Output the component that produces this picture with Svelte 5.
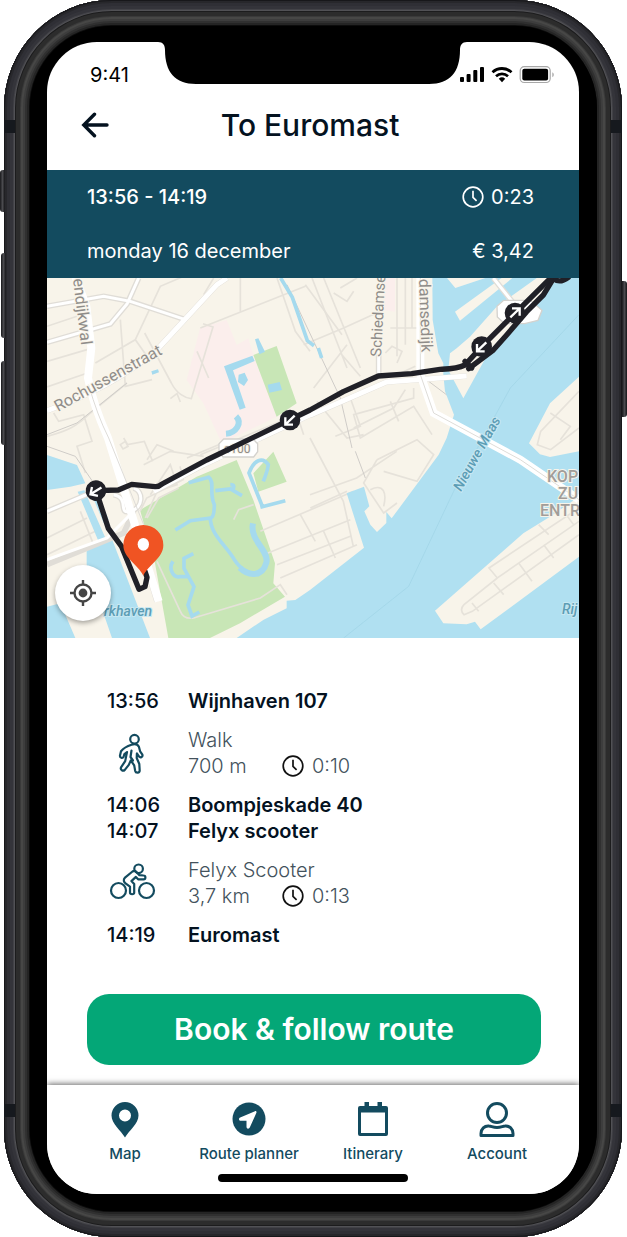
<script>
  const tabs = ['Map', 'Route planner', 'Itinerary', 'Account'];
  const stops = [
    { kind: 'stop', rows: [['13:56', 'Wijnhaven 107']] },
    { kind: 'leg', icon: 'walk', name: 'Walk', distance: '700 m', duration: '0:10' },
    { kind: 'stop', rows: [['14:06', 'Boompjeskade 40'], ['14:07', 'Felyx scooter']] },
    { kind: 'leg', icon: 'bike', name: 'Felyx Scooter', distance: '3,7 km', duration: '0:13' },
    { kind: 'stop', rows: [['14:19', 'Euromast']] }
  ];
  // Direction markers along the route: centre and heading in degrees.
  const markers = [
    [729, 426, 0],
    [147, 638, 12],
    [1304, 206, 0],
    [1404, 105, 180]
  ];
</script>

{#snippet clock()}
  <svg class="clock" viewBox="0 0 22 22" aria-hidden="true">
    <circle cx="11" cy="11" r="9.8" /><path d="M11 4.8v6.6l3.6 3.4" />
  </svg>
{/snippet}

<div class="phone">
  <i class="key mute"></i><i class="key up"></i><i class="key down"></i><i class="key power"></i>
  <i class="band tl"></i><i class="band tr"></i><i class="band bl"></i><i class="band br"></i>
  <div class="bezel">
    <main class="screen">
      <svg class="notch" viewBox="0 0 309 42" aria-hidden="true">
        <path d="M0 0c5 0 7 3 7 8C7 30 17 42 38 42H271C292 42 302 30 302 8c0-5 2-8 7-8z" />
      </svg>

      <div class="status">
        <span>9:41</span>
        <svg viewBox="0 0 95 18" aria-hidden="true">
          <rect x="0" y="11" width="4" height="5" rx="1" /><rect x="6.6" y="8" width="4" height="8" rx="1" />
          <rect x="13.3" y="4" width="4" height="12" rx="1" /><rect x="20" y="1" width="4" height="15" rx="1" />
          <g fill="none" stroke="#000" stroke-width="2.8">
            <path d="M32.5 6.2a14 14 0 0 1 19 0" /><path d="M36 10.2a9 9 0 0 1 12 0" />
          </g>
          <path d="M38.8 12.7a5 5 0 0 1 6.4 0L42 16.2z" />
          <rect x="60.2" y=".7" width="30" height="15.8" rx="4" fill="none" stroke="#a8a8a8" stroke-width="1.2" />
          <rect x="62.3" y="2.8" width="25.8" height="11.6" rx="2" />
          <path d="M92.3 6.2c2 1 2 4 0 5z" fill="#a8a8a8" />
        </svg>
      </div>

      <header>
        <button class="back" aria-label="Back">
          <svg viewBox="0 0 28 26"><path d="M26 13H3M13.5 2.2 2.8 13l10.7 10.8" /></svg>
        </button>
        <h1>To Euromast</h1>
      </header>

      <section class="trip">
        <div><strong>13:56 - 14:19</strong><span class="time">{@render clock()}0:23</span></div>
        <div><span>monday 16 december</span><span>€ 3,42</span></div>
      </section>

      <section class="map" aria-label="Route map">
        <svg viewBox="0 0 532 360">
          <rect width="532" height="360" fill="#f8f4ea" />
          <g transform="scale(.33333)">
            <path class="pink" d="M459 151 539 126l30 75 35-20 15 50 70 185-165 80-55-120-50-70zM1014 0h30v101l-35-5z" />
            <path class="green" d="M279 696 449 596 569 546l50 120 65 190-5 60 35 40-135 80-90 44H364L324 856zM619 586l60-65 40 90-85 30zM619 231l70-27 60 172-60 40z" />

            <g class="minor">
              <path d="M0 145l90-30M0 250l120-35M0 327l115-40M0 475c60-15 90-30 130-70l110-90M145 255l120-70 35 50M220 125l15 200 80-20M265 185l75-160 70-30M293 165l80 150c15 30 40 45 60 47l65-215-30-10M370 362l20-15 10 25M450 220l35 80M470 50l30-50M460 150l315-125M580 100V0M690 0l55 160 44 60M775 20l110 150M800 330l100-130M460 530l290-120 20 60M20 405l15 25 75-20 25 80-45 15 25 80M230 480l12 20 50-10 25 60M220 500l15-10 8 15-15 8zM290 560l80-40 100 15M420 540l120-50" />
              <path d="M795 0l105 270M830 0l110 270M880 30l50-30M860 45l40 25 20-30M770 200l120-50 110-50M1050 0v235M1075 0v200M1095 0v150M1030 150h110M880 225l60 70M1015 225l20-20 30 15-15 35M1040 295l65-30M910 360l30 85-75 30M920 450l120-60 35-55M1100 330v30l-180 50 20 70 160-95 55 85M810 370l90 110 50-10M1030 370l25 60M990 545l120-60 50 45-50 80-100-30" />
              <path d="M300 545l30-45 50 20M310 650l60-90 20 60-60 20-35 80M789 480l100 190 30 135M789 650l140-50 120-80M790 690l110-50M640 760l280-120M650 830l260-105M690 860l220-85M700 900l230-100M760 710l45 80M830 760l35 80M990 545l-40 70 60 90 40-30M970 635c40-20 50 10 40 50M560 725l15-30 45-15M300 720l35-60 60-30M0 830l145-70M100 700l60 150M0 780l120-60" />
              <path d="M279 700l20-40 110-55-10-40M330 850l70 150q10 25 40 20l200-60 60-40 20 30" />
            </g>
            <path class="rail" d="M0 470l90-35 150-120M720 20l80 170 80 170 35 150M0 505l85 30 55 80M1145 310l120 90 230 140M925 520l30 80" />

            <path class="water" d="M1156 0 1157 126 1174 226 1189 256 1189 290 1194 340 1221 410 1199 480 1175 530 1034 721 1018 702V735L990 762 970 740 952 700 967 685 951 626 899 646 951 809 789 936 745 966 719 968V991L650 1025 569 1080H1596V0z" />
            <path class="water" d="M0 531l90 30 25 55-45 10L0 636zM92 641l20-4 65 147-20 12zM130 640l15-10 40 95-15 10zM119 816l75-35 115 299H195L119 860zM0 986l40-10 45 104H0z" />
            <path class="pond" d="M701 0l35 58 45 130 20 15M814 210l10 30" />
            <path class="pond fill" d="M531 265l85-32 7 16-65 28 38 112-18 6zM575 290l18-6 10 22-12 18-18-12zM624 184l10-3 20 40-17 8zM662 320l36-8 7 24-38 8zM313 280l20-6 3 9-20 7z" />
            <path class="pond thick" d="M567 415c20 20 0 50-30 52" />
            <path class="pond" d="M425 614l60-16c20 15 0 45 17 82 0 30-5 40-12 40l-60 8-45 28M505 638l45-5 35 20M550 620q18 0 5 18M439 827l-28 14v30l30 55-18 55 12 33 22-12M378 850c-15 20 0 50 20 46h30M490 720c0 50 50 85 72 125 20 30 40 40 75 45M648 690l-42-105c15-40 40-50 58-25-2 20-8 30-15 50M640 688l75-20" />
            <path class="pond thick" d="M618 736c-12 50 50 83 40 118-12 45-55 40-80 15" />

            <path class="land" d="M1200 0h115l-90 30zM1224 101 1364 0h32L1239 128zM1229 211 1269 176 1349 86 1419 36 1489-14 1539-4 1429 106 1329 216 1249 361 1204 276 1209 226zM1446 496 1509 376 1596 296V520L1509 537l-30-8zM1164 998 1429 766 1509 716 1596 656V836L1301 1054l-17-23-25 8-70-3z" />
            <g class="minor">
              <path d="M1596 340l-115 120-10 40 40 15 85-65M1510 405l60 40-30 40" />
              <path d="M1596 690l-270 180 25 30 245-170M1351 900l-100 80q-15 15 0 30l25-10 320-230M1340 915l30 35M1275 975l20 25M1415 855l40 55M1490 800l30 40M1475 740l30 30M1550 700l30 40" />
            </g>
            <path class="ferry" d="M1596 110 1390 330 1220 640 1085 925 890 1080" />

            <g class="casing">
              <path d="M0 85l170-30 80 15 165 55M0 193l190-55 50-60 35-78M0 398C110 360 230 300 330 215L510 20l30-20M83-10l35 95 15 125-10 90q15 80 60 180L330 970M789 412l230-100 240-18M1120 0v290l40 115 260 140 176 120M320 640l150-80 320-150M995 294v-80M1339 0l60 75M0 700l130-55M0 860l230-95 30-65M200 650c50 10 10 60 50 50s40-60 10-70" />
            </g>
            <g class="road">
              <path class="slim" d="M0 85l170-30 80 15 165 55M0 193l190-55 50-60 35-78M995 294v-80M1339 0l60 75M0 700l130-55M0 845l180-65 80-80M200 650c50 10 10 60 50 50s40-60 10-70" />
              <path d="M0 398C110 360 230 300 330 215L510 20l30-20M789 412l230-100 240-18M320 640l150-80 320-150" />
              <path class="wide" d="M83-10l35 95 15 125-10 90q15 80 60 180L335 970M1120 0v290l40 115 260 140 176 120" />
            </g>
            <path class="lane" d="M1120 0v290l40 115 260 140 176 120M125 320q25 90 60 160L290 740" />
            <path class="shield" d="M530 483h88l14 14v24l-12 16h-92l-12-16v-24zM1350 85l20-18h80l35 30-12 30-40 10h-60l-22-20z" />
          </g>
          <g class="label">
            <text font-size="16" transform="translate(26 1) rotate(83)">endijkwal</text>
            <text font-size="16" transform="translate(11 134) rotate(-29)">Rochussenstraat</text>
            <text font-size="15" transform="translate(334 79) rotate(-87)">Schiedamse</text>
            <text font-size="16" transform="translate(372 1) rotate(88)">damsedijk</text>
            <text font-size="12" x="177" y="175">s100</text>
            <text class="blue" font-size="14" transform="translate(414 214) rotate(-61)">Nieuwe Maas</text>
            <text class="blue" font-size="14" x="57" y="338">rkhaven</text>
            <text class="blue" font-size="14" x="515" y="336">Rij</text>
            <text class="place" font-size="16" x="500" y="204">KOP</text>
            <text class="place" font-size="16" x="511" y="221">ZU</text>
            <text class="place" font-size="16" x="493" y="238">ENTR</text>
          </g>
          <g transform="scale(.33333)">
            <path class="route" d="M1265 272 1339 216 1379 171 1439 101 1489 51 1519 2q20 15 45-4" />
            <path class="route" d="M1515-4 1404 106 1304 206 1254 261C1230 273 1200 273 1179 274L1094 287 994 294 889 341 789 396 479 546 345 618Q335 627 324 626L254 619 214 636 147 638 184 751 224 806 276 934 294 926 300 898 294 880" />
            <path d="M1254 250l20 20" class="route" />
            {#each markers as [x, y, turn]}
              <g transform="translate({x} {y}) rotate({turn})">
                <circle r="31" fill="#202027" />
                <path d="M14-13-12 12M-14-8v22H9" fill="none" stroke="#fff" stroke-width="7" />
              </g>
            {/each}
            <path d="M289 893c-16-34-60-52-60-92a60 60 0 0 1 120 0c0 40-44 58-60 92z" fill="#f05423" />
            <ellipse cx="289" cy="799" rx="17" ry="19" fill="#fff" />
          </g>
        </svg>
        <button class="locate" aria-label="Centre on my location">
          <svg viewBox="0 0 26 26">
            <circle cx="13" cy="13" r="8.5" /><circle class="dot" cx="13" cy="13" r="4.4" />
            <path d="M13 0v5M13 21v5M0 13h5M21 13h5" />
          </svg>
        </button>
      </section>

      <section class="steps">
        {#each stops as s}
          {#if s.kind === 'stop'}
            <div class="stop">
              {#each s.rows as [time, place]}<time>{time}</time><strong>{place}</strong>{/each}
            </div>
          {:else}
            <div class="leg">
              {#if s.icon === 'walk'}
                <svg class="mode" viewBox="0 0 52 52" aria-hidden="true">
                  <circle cx="27.500" cy="12.200" r="4.300" />
                  <path d="M24.500 17.800c3-1 6-.6 7.400 2l1.200 4.500 2.300 3.400c.6 2-1.800 3.600-3.400 1.900l-2.100-3.200-.2 4.600 2.600 6 .4 6.600c0 2.600-4 2.800-4.500.4l-1-5.600-3.400-5-2 4.500-4 5c-2 2-5-.5-3.600-2.800l4-6 1.800-9-2.600 2-.8 2.600c-1 2-4 1.200-3.600-1.200l1-4.200c2.400-3 6.400-5.200 10.500-6.500z" />
                  <path d="M24.500 23.500l-1 6.500 2.500 3.500" />
                </svg>
              {:else}
                <svg class="mode" viewBox="0 0 52 52" aria-hidden="true">
                  <circle cx="11.500" cy="33.500" r="7.500" /><circle cx="39.500" cy="33.500" r="7.500" />
                  <circle cx="31.600" cy="11.800" r="4.300" />
                  <path d="M25.500 14.500 18 20.600c-2 2-1.300 4.500.5 5.800l4.500 3.200v6c0 2.200 4.200 2.200 4.200 0v-8.500l-2.800-3 4.500-4.200 2.200 2.400h5.500c2.400 0 2.400-3.800 0-3.800l-4.200-.3-3-3.300c-1-1-2.700-1.300-3.900-.4z" />
                </svg>
              {/if}
              <div>
                <p>{s.name}</p>
                <p class="detail"><span>{s.distance}</span>{@render clock()}{s.duration}</p>
              </div>
            </div>
          {/if}
        {/each}
      </section>

      <button class="book">Book &amp; follow route</button>

      <nav>
        <div class="tabs">
          {#each tabs as tab, i}
            <a href="#{i}">
              <svg viewBox="0 0 36 36" aria-hidden="true">
                {#if i === 0}
                  <path fill-rule="evenodd" d="M18 35.500C14 28.500 4.500 22 4.500 13.500a13.500 13.500 0 0 1 27 0C31.500 22 22 28.500 18 35.500zM18 7.500a6 6 0 1 0 0 12 6 6 0 0 0 0-12z" />
                {:else if i === 1}
                  <circle cx="18" cy="17" r="16.500" />
                  <path fill="#fff" d="M24 9.200 9.200 15.500c-2 1-1.400 3.300.5 3.300h5.800v6c0 2.300 2.600 2.500 3.400.5l6.500-14.500c.4-1-.4-2-1.400-1.600z" />
                {:else if i === 2}
                  <path fill-rule="evenodd" d="M9.500 0H14v4h8.500V0H27v4h4q2 0 2 2v26q0 2-2 2H5q-2 0-2-2V6q0-2 2-2h4.500zM6 10.500v20.500h24V10.500z" />
                {:else}
                  <g fill="none" stroke="#134b5f" stroke-width="3">
                    <circle cx="18" cy="11" r="9.500" />
                    <path stroke-linejoin="round" d="M2 33.500v-2c0-4.500 3.500-8 8-7.500 2.500.2 4 1.500 8 1.500s5.500-1.300 8-1.500c4.500-.5 8 3 8 7.500v2z" />
                  </g>
                {/if}
              </svg>
              {tab}
            </a>
          {/each}
        </div>
        <div class="home"></div>
      </nav>
    </main>
  </div>
</div>

<style>
  :global(body) { background: #fff; }
  * { box-sizing: border-box; }
  .phone {
    position: relative;
    margin: 0 5px 0 4px;
    padding: 26px;
    padding-right: 25px;
    border-radius: 108px;
    background: #000;
    font-family: Inter, sans-serif;
    color: #04121f;
    box-shadow:
      inset 0 0 0 1px #17171a, inset 0 0 0 3px #27272b, inset 0 0 0 6px #2f2f35,
      inset 0 0 0 9px #34343a, inset 0 0 0 10px #424247, inset 0 0 0 11px #515155,
      inset 0 0 0 12px #1c1c1d, inset 0 0 0 16px #2c2c2c, inset 0 0 0 17px #3a3a3a,
      inset 0 0 0 19px #474746, inset 0 0 0 21px #3d3d3d, inset 0 0 0 23px #303030,
      inset 0 0 0 25px #242424, inset 0 0 0 26px #0c0c0c;
  }
  .key {
    position: absolute;
    width: 5px;
    background: linear-gradient(90deg, #18181b, #4a4a4e, #151518);
    border-radius: 3px 0 0 3px;
  }
  .mute { left: -4px; top: 170px; height: 42px; }
  .up { left: -3px; top: 253px; height: 85px; }
  .down { left: -3px; top: 361px; height: 84px; }
  .power { right: -5px; top: 281px; height: 136px; border-radius: 0 3px 3px 0; }
  .band { position: absolute; width: 11px; height: 13px; background: #16191e; }
  .tl, .bl { left: 0; }
  .tr, .br { right: 0; }
  .tl, .tr { top: 120px; }
  .bl, .br { bottom: 120px; }
  .bezel { padding: 16px 18px 17px 17px; border-radius: 82px; background: #000; }
  .screen {
    position: relative;
    overflow: hidden;
    border-radius: 50px;
    background: #fff;
  }
  .notch { position: absolute; top: 0; left: calc(50% - 155px); width: 309px; display: block; }
  button { border: 0; padding: 0; font: inherit; cursor: pointer; }
  p, h1 { margin: 0; }

  .status {
    display: flex;
    justify-content: space-between;
    align-items: center;
    padding: 18px 24px 0 43px;
    font-size: 20px;
    line-height: 30px;
    color: #000;
  }
  .status svg { width: 95px; height: 18px; }

  header {
    display: grid;
    grid-template-columns: 28px 1fr 28px;
    align-items: center;
    padding: 16px 40px 26px 34px;
  }
  .back { background: none; height: 26px; }
  .back svg { display: block; width: 28px; height: 26px; }
  .back path { fill: none; stroke: #04121f; stroke-width: 3.4; stroke-linecap: round; }
  h1 { font-size: 30px; font-weight: 500; line-height: 38px; text-align: center; }

  .trip { background: #134b5f; color: #fff; padding: 0 45px 0 40px; font-size: 20px; line-height: 54px; }
  .trip > div { display: flex; justify-content: space-between; }
  strong { font-weight: 600; }
  .trip strong { font-weight: 500; }
  .time { display: flex; align-items: center; gap: 7px; }
  .clock { width: 22px; height: 22px; flex: none; fill: none; stroke: currentColor; stroke-width: 1.7; }

  .map { position: relative; overflow: hidden; }
  .map > svg { display: block; width: 100%; }
  .pink { fill: #fbeeec; }
  .green { fill: #c8e6b6; }
  .water { fill: #b0e0f1; }
  .land { fill: #f8f4ea; }
  .minor { fill: none; stroke: #e6e2da; stroke-width: 5; }
  .rail { fill: none; stroke: #cfccc8; stroke-width: 3; }
  .ferry { fill: none; stroke: #9fd3e6; stroke-width: 2; }
  .pond { fill: none; stroke: #a5daee; stroke-width: 11; }
  .pond.fill { fill: #a5daee; stroke: none; }
  .pond.thick { stroke-width: 18; }
  .casing { fill: none; stroke: #e0ddd7; stroke-width: 17; }
  .road { fill: none; stroke: #fff; stroke-width: 15; }
  .slim { stroke-width: 9; }
  .wide { stroke-width: 24; }
  .lane { fill: none; stroke: #dedcd8; stroke-width: 3; }
  .shield { fill: #fff; stroke: #d4d2ce; stroke-width: 4; }
  .route { fill: none; stroke: #202027; stroke-width: 16; stroke-linejoin: round; stroke-linecap: round; }
  .label { fill: #8f8c89; stroke: #f8f4ea; stroke-width: 2; paint-order: stroke; font-family: Roboto, sans-serif; }
  .blue { fill: #5c9db5; stroke: #c8e8f2; font-style: italic; font-weight: 500; }
  .place { fill: #a19d99; font-weight: 500; }
  .locate {
    position: absolute;
    left: 8px;
    bottom: 17px;
    width: 56px;
    height: 56px;
    border-radius: 50%;
    background: #fff;
    box-shadow: 0 2px 5px rgba(0, 0, 0, .35);
  }
  .locate svg { width: 26px; height: 26px; display: block; margin: auto; fill: none; stroke: #454545; stroke-width: 2.4; }
  .locate .dot { fill: #454545; stroke: none; }

  .steps {
    display: grid;
    gap: 13px;
    padding: 50px 40px 46px 60px;
    font-size: 20px;
    line-height: 26px;
  }
  .stop, .leg { display: grid; grid-template-columns: 52px 1fr; column-gap: 29px; }
  time { font-weight: 500; }
  .leg { font-weight: 300; color: #43525c; }
  .mode { width: 52px; height: 52px; fill: none; stroke: #134b5f; stroke-width: 2.2; stroke-linejoin: round; stroke-linecap: round; }
  .detail { display: flex; align-items: center; gap: 8px; }
  .detail span { width: 86px; }
  .detail .clock { stroke: #111; }

  .book {
    display: block;
    width: calc(100% - 78px);
    margin: 0 38px 20px 40px;
    padding: 16px;
    border-radius: 22px;
    background: #04a777;
    color: #fff;
    font-size: 30px;
    font-weight: 600;
    line-height: 39px;
  }

  nav { position: relative; padding: 17px 20px 12px 16px; background: #fff; box-shadow: 0 -1px 6px rgba(0, 0, 0, .6); }
  .tabs { display: flex; }
  a {
    flex: 1;
    display: flex;
    flex-direction: column;
    align-items: center;
    gap: 6px;
    color: #134b5f;
    font-size: 15px;
    font-weight: 500;
    line-height: 20px;
    text-decoration: none;
  }
  a svg { width: 36px; height: 36px; fill: #134b5f; }
  .home { width: 190px; height: 8px; margin: 10px 151px 0 auto; border-radius: 4px; background: #000; }
</style>
